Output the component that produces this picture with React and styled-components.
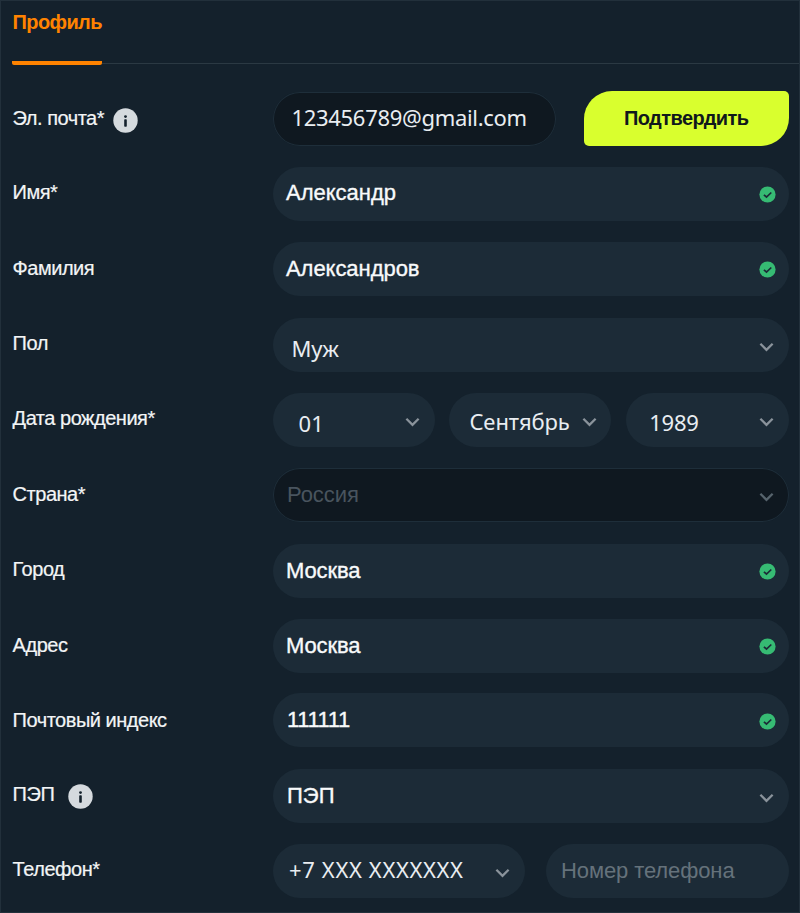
import React from "react";
import styled, { createGlobalStyle } from "styled-components";

const GlobalStyle = createGlobalStyle`
  * { box-sizing: border-box; }
  body { margin: 0; background: #14212c; }
`;

const Panel = styled.main`
  width: 800px;
  height: 913px;
  padding: 0 10px 0 11px;
  overflow: hidden;
  background: #14212c;
  border: 1px solid #22303b;
  font-family: "Liberation Sans", Arial, sans-serif;
`;

const Tabs = styled.nav`
  display: flex;
  height: 64px;
  margin-right: -10px;
  background: linear-gradient(#2b3943, #2b3943) 0 62px / 100% 1px no-repeat;
`;

const Tab = styled.button`
  width: 90px;
  height: 64px;
  padding: 1px 0 18px 0.5px;
  border: 0;
  border-bottom: 4px solid #ff8300;
  border-radius: 2px;
  background: none;
  color: #ff8300;
  font: bold 20px/41px "Liberation Sans", Arial, sans-serif;
  letter-spacing: -0.6px;
  text-align: left;
`;

const Form = styled.form`
  display: grid;
  grid-template-columns: 261px 516px;
  grid-template-rows: 75px 75px 76px 75px 75px 76px 75px 74px 76px 75px 54px;
  margin-top: 27px;
`;

const Label = styled.label`
  display: flex;
  align-items: center;
  height: 54px;
  padding-left: 0.6px;
  color: #f3f5f6;
  font-size: 20px;
  letter-spacing: -0.48px;
  white-space: nowrap;
  -webkit-text-stroke: 0.2px currentColor;
`;

const Text = styled.span`
  margin-top: ${(p) => p.$dy || 0}px;
  margin-bottom: ${(p) => -(p.$dy || 0)}px;
`;

const InfoIcon = styled.svg`
  width: 25px;
  height: 25px;
  margin: ${(p) => p.$top}px 0 0 ${(p) => p.$gap}px;
`;

const Controls = styled.div`
  display: grid;
  grid-template-columns: ${(p) => p.$columns || "1fr"};
  column-gap: ${(p) => p.$gap || 0}px;
  height: 54px;
`;

const Field = styled.div`
  display: flex;
  align-items: center;
  justify-content: space-between;
  height: 54px;
  padding-left: ${(p) => p.$left || 14}px;
  padding-right: ${(p) => p.$right || 16}px;
  border-radius: 27px;
  background: ${(p) => (p.$dark ? "#0f1820" : "#1c2b37")};
  box-shadow: ${(p) => (p.$dark ? "inset 0 0 0 1px #1e2e3a" : "none")};
`;

const Value = styled(Text)`
  color: ${(p) => p.$color || "#f8fafb"};
  font-size: 22px;
  line-height: 30px;
  letter-spacing: ${(p) => p.$spacing || 0}px;
  white-space: pre;
  -webkit-text-stroke: ${(p) => (p.$firm ? "0.35px currentColor" : "0")};
`;

const SoftValue = styled(Value)`
  color: #e9edf1;
  font-family: "Noto Sans", "Open Sans", sans-serif;
`;

const Confirm = styled.button`
  height: 55px;
  margin-top: -1px;
  padding: 0;
  border: 0;
  border-radius: 28px 5px 28px 5px;
  background: #d9ff2e;
  color: #10181c;
  font: bold 20px/55px "Liberation Sans", Arial, sans-serif;
  letter-spacing: -0.55px;
`;

const Glyph = styled.svg`
  flex: none;
  margin-top: ${(p) => p.$top || 0}px;
`;

const Info = ({ gap, top = 5 }) => (
  <InfoIcon viewBox="0 0 25 25" $gap={gap} $top={top}>
    <circle cx="12.5" cy="12.5" r="12.2" fill="#d5dade" />
    <circle cx="12.5" cy="8.6" r="1.4" fill="#14212c" />
    <rect x="11.2" y="11.2" width="2.6" height="7.6" rx="0.8" fill="#14212c" />
  </InfoIcon>
);

const Check = ({ top = 1 }) => (
  <Glyph width="17" height="17" viewBox="0 0 17 17" $top={top}>
    <circle cx="8.5" cy="8.5" r="8.1" fill="#36bb73" />
    <path d="M4.9 8.8 7.5 11 12.3 6.5" fill="none" stroke="#1c2b37" strokeWidth="1.7" />
  </Glyph>
);

const Chevron = ({ top = 3, color = "#8a939b" }) => (
  <Glyph width="15" height="10" viewBox="0 0 15 10" $top={top}>
    <path d="M1.4 1.7 7.5 7.8 13.6 1.7" fill="none" stroke={color} strokeWidth="2.3" />
  </Glyph>
);

const TextField = ({ children, dy = 0, spacing, left = 13, checkTop }) => (
  <Field $left={left} $right={13}>
    <Value $firm $dy={dy} $spacing={spacing}>{children}</Value>
    <Check top={checkTop} />
  </Field>
);

export default function App() {
  return (
    <>
      <GlobalStyle />
      <Panel>
        <Tabs>
          <Tab>Профиль</Tab>
        </Tabs>
        <Form>
          <Label><Text $dy={-1}>Эл. почта*</Text><Info gap={8.5} top={3} /></Label>
          <Controls $columns="283px 205.5px" $gap={27.5}>
            <Field $dark $left={18.5}>
              <SoftValue $dy={-2} $spacing={-0.31}>123456789@gmail.com</SoftValue>
            </Field>
            <Confirm type="button">Подтвердить</Confirm>
          </Controls>

          <Label><Text $dy={-2}>Имя*</Text></Label>
          <Controls><TextField dy={-1}>Александр</TextField></Controls>

          <Label><Text $dy={-1}>Фамилия</Text></Label>
          <Controls><TextField checkTop={0} spacing={-0.05}>Александров</TextField></Controls>

          <Label><Text $dy={-2}>Пол</Text></Label>
          <Controls>
            <Field $left={18.5} $right={15}>
              <SoftValue $dy={3} $spacing={-0.2}>Муж</SoftValue>
              <Chevron top={4} />
            </Field>
          </Controls>

          <Label><Text $dy={-2}>Дата рождения*</Text></Label>
          <Controls $columns="162px 162px 163px" $gap={14.4}>
            <Field $left={25.5} $right={15}>
              <SoftValue $dy={3} $spacing={0.2}>01</SoftValue>
              <Chevron />
            </Field>
            <Field $left={20} $right={14}>
              <SoftValue $dy={1} $spacing={-0.1}>Сентябрь</SoftValue>
              <Chevron />
            </Field>
            <Field $left={23.5} $right={15}>
              <SoftValue $dy={2} $spacing={-0.25}>1989</SoftValue>
              <Chevron />
            </Field>
          </Controls>

          <Label><Text $dy={-1}>Страна*</Text></Label>
          <Controls>
            <Field $dark $left={14} $right={15}>
              <Value $dy={0} $color="#49545e" $spacing={-0.05}>Россия</Value>
              <Chevron color="#56636c" />
            </Field>
          </Controls>

          <Label><Text $dy={-2}>Город</Text></Label>
          <Controls><TextField checkTop={0} spacing={-0.1}>Москва</TextField></Controls>

          <Label><Text $dy={-1}>Адрес</Text></Label>
          <Controls><TextField checkTop={0} spacing={-0.1}>Москва</TextField></Controls>

          <Label><Text>Почтовый индекс</Text></Label>
          <Controls><TextField spacing={-0.4} left={14} checkTop={2}>111111</TextField></Controls>

          <Label><Text $dy={-2}>ПЭП</Text><Info gap={13.5} top={1} /></Label>
          <Controls>
            <Field $left={14} $right={15}>
              <Value $firm>ПЭП</Value>
              <Chevron top={4} />
            </Field>
          </Controls>

          <Label><Text $dy={-2}>Телефон*</Text></Label>
          <Controls $columns="252px 243px" $gap={21}>
            <Field $left={16} $right={15}>
              <SoftValue $dy={-2} $spacing={0.65}>+7 XXX XXXXXXX</SoftValue>
              <Chevron top={4} />
            </Field>
            <Field $left={15}>
              <Value $dy={0} $color="#65727b" $spacing={-0.1}>Номер телефона</Value>
            </Field>
          </Controls>
        </Form>
      </Panel>
    </>
  );
}
